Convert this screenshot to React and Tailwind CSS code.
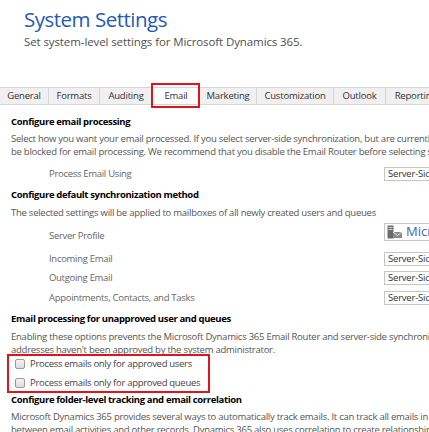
const tabs = [
  { name: "General", w: "w-[49px]" },
  { name: "Formats", w: "w-[51px]" },
  { name: "Auditing", w: "w-[53px]" },
  { name: "Email", w: "w-[47px]", active: true },
  { name: "Marketing", w: "w-[57px]" },
  { name: "Customization", w: "w-[77px]" },
  { name: "Outlook", w: "w-[52px]" },
  { name: "Reporting", w: "w-[60px]" },
];

const ServerIcon = () => (
  <svg width="16" height="14" viewBox="0 0 16 14" className="shrink-0">
    <rect x="0.5" y="0.5" width="6" height="13" fill="#6b6b6b" />
    <rect x="1.5" y="2" width="4" height="1" fill="#d0d0d0" />
    <rect x="1.5" y="4" width="4" height="1" fill="#d0d0d0" />
    <rect x="6" y="7" width="9" height="6" fill="#8a8a8a" />
    <path d="M6 7 L10.5 10.5 L15 7" stroke="#e8e8e8" strokeWidth="1" fill="none" />
  </svg>
);

const Field = ({ children }) => (
  <div className="ml-auto w-[60px] h-[14px] border border-[#c6c6c6] bg-white pl-[3px] flex items-center overflow-hidden whitespace-nowrap text-[9.5px] tracking-[-0.2px] leading-[12px] text-[#333]">
    {children}
  </div>
);

const Row = ({ label, className = "" }) => (
  <div className={`w-[433px] flex items-center h-[14px] ${className}`}>
    <span className="pl-[38px] text-[9.5px] tracking-[-0.3px] leading-[14px] text-[#666] whitespace-nowrap">{label}</span>
    <Field>Server-Side</Field>
  </div>
);

const Heading = ({ children, className = "" }) => (
  <div className={`text-[9.5px] tracking-[-0.35px] leading-[14px] font-bold text-black whitespace-nowrap ${className}`}>
    {children}
  </div>
);

const Desc = ({ children, className = "" }) => (
  <p className={`text-[9.5px] tracking-[-0.25px] leading-[13px] text-[#555] whitespace-nowrap ${className}`}>
    {children}
  </p>
);

export default function App() {
  return (
    <div className="w-[429px] h-[432px] overflow-hidden bg-white font-['Segoe_UI','Open_Sans',sans-serif]">
      {/* Title */}
      <div className="pl-6 pt-[6px]">
        <h1 className="text-[20.5px] tracking-[-0.5px] leading-[26px] text-[#1f5bb5]">System Settings</h1>
        <p className="mt-[2px] text-[11.5px] tracking-[-0.1px] leading-[16px] text-[#505050]">
          Set system-level settings for Microsoft Dynamics 365.
        </p>
      </div>

      {/* Tabs */}
      <div className="mt-[37px] flex h-[18px] border-y border-[#d6d6d6] bg-[#f0f0f0] whitespace-nowrap">
        {tabs.map((t) => (
          <div
            key={t.name}
            className={`relative shrink-0 ${t.w} flex items-center justify-center border-r border-[#d6d6d6] text-[9.5px] tracking-[-0.2px] text-[#333] ${
              t.active ? "bg-white" : ""
            }`}
          >
            {t.name}
            {t.active && (
              <span className="absolute -top-[5px] -bottom-[4px] -left-[2px] -right-[1px] border-2 border-[#e3131e]" />
            )}
          </div>
        ))}
      </div>

      {/* Content */}
      <div className="pl-[11px]">
        <Heading className="mt-[10px]">Configure email processing</Heading>
        <Desc className="mt-[3px]">
          Select how you want your email processed. If you select server-side synchronization, but are currently using
          <br />
          be blocked for email processing. We recommend that you disable the Email Router before selecting server-side
        </Desc>
        <Row label="Process Email Using" className="mt-[9px]" />

        <Heading className="mt-[7px]">Configure default synchronization method</Heading>
        <Desc className="mt-[4px]">
          The selected settings will be applied to mailboxes of all newly created users and queues
        </Desc>

        <div className="mt-[4px] w-[433px] flex items-start h-[18px]">
          <span className="pl-[38px] pt-[6px] text-[9.5px] tracking-[-0.3px] leading-[14px] text-[#666]">Server Profile</span>
          <div className="ml-auto w-[60px] h-[18px] border border-[#c6c6c6] bg-white pl-[2px] flex items-center gap-[3px] overflow-hidden whitespace-nowrap text-[13px] text-[#3a66c4]">
            <ServerIcon />
            Microsoft Exchange Online
          </div>
        </div>
        <Row label="Incoming Email" className="mt-[11px]" />
        <Row label="Outgoing Email" className="mt-[5px]" />
        <Row label="Appointments, Contacts, and Tasks" className="mt-[6px]" />

        <Heading className="mt-[7px]">Email processing for unapproved user and queues</Heading>
        <Desc className="mt-[4px]">
          Enabling these options prevents the Microsoft Dynamics 365 Email Router and server-side synchronization from
          <br />
          addresses haven't been approved by the system administrator.
        </Desc>

        <div className="-mt-[2px] -ml-[4px] w-[203px] border-2 border-[#e3131e] pl-[6px] flex flex-col gap-[3px]">
          {["Process emails only for approved users", "Process emails only for approved queues"].map((l) => (
            <label key={l} className="flex items-center h-[16px] gap-[5px] text-[9.5px] tracking-[-0.3px] text-[#444] whitespace-nowrap">
              <span className="shrink-0 w-[10px] h-[10px] rounded-[2px] border border-[#9a9a9a] bg-gradient-to-b from-[#f4f4f4] to-[#dcdcdc]" />
              {l}
            </label>
          ))}
        </div>

        <Heading>Configure folder-level tracking and email correlation</Heading>
        <Desc className="mt-[3px]">
          Microsoft Dynamics 365 provides several ways to automatically track emails. It can track all emails in a folder
          <br />
          between email activities and other records. Dynamics 365 also uses correlation to create relationships
        </Desc>
      </div>
    </div>
  );
}
